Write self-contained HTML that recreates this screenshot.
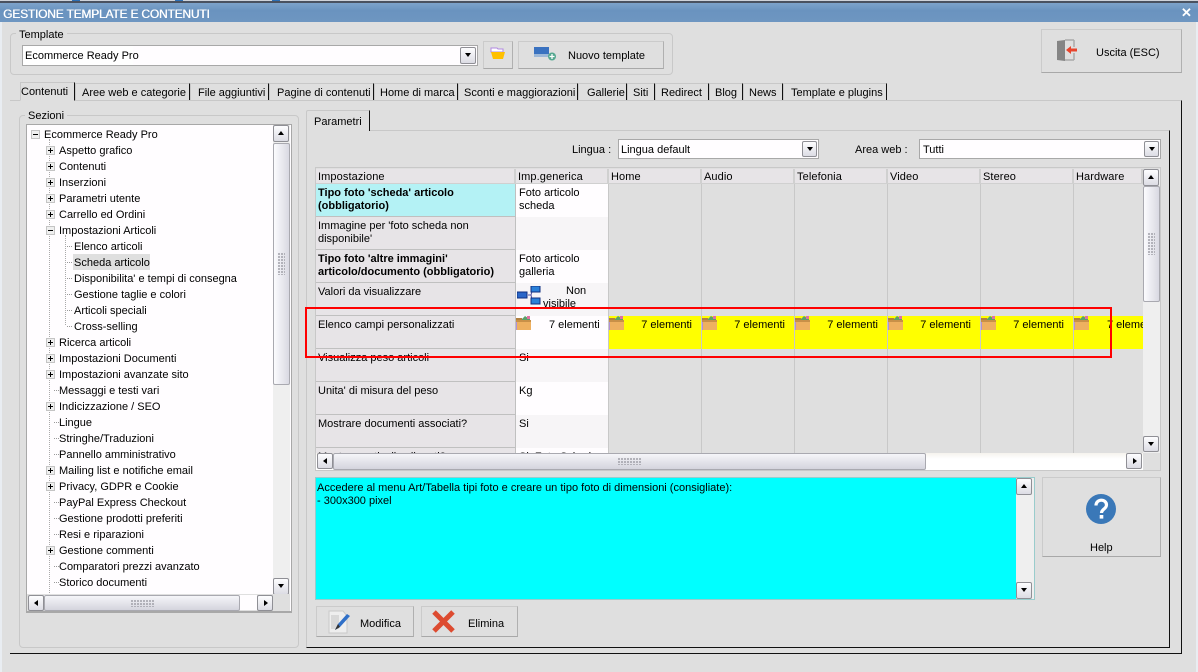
<!DOCTYPE html>
<html><head><meta charset="utf-8"><style>
html,body{margin:0;padding:0}
body{width:1198px;height:672px;position:relative;overflow:hidden;background:#dfdfdf;font:11px/13px "Liberation Sans",sans-serif;color:#000}
div,span,svg{position:absolute;box-sizing:border-box}
span{white-space:nowrap;line-height:17px}
.btn{background:#dfdfdf;border:1px solid #cbcbcb;border-right:1px solid #b0b0b0;border-bottom:1px solid #a8a8a8}
.grp{border:1px solid #c8c8c8;border-radius:4px}
.leg{background:#dfdfdf;padding:0 3px;line-height:15px;margin-top:1px}
.combo{background:#fffdff;border:1px solid #a8a8a8}
.sb{background:linear-gradient(#fdfdff,#dcdce4);border:1px solid #8f8f95;border-radius:2px;width:16px;height:16px}
.sb:after{content:"";position:absolute;left:3.500px;top:5px;border:3.500px solid transparent;border-top:4px solid #000;border-bottom:0}
.sb.up:after{border-top:0;border-bottom:4px solid #000}
.sb.l:after{left:5px;top:3.500px;border:3.500px solid transparent;border-right:4px solid #000;border-left:0}
.sb.r:after{left:6px;top:3.500px;border:3.500px solid transparent;border-left:4px solid #000;border-right:0}
.th{background:linear-gradient(90deg,#fbfbfe,#d9d9e2);border:1px solid #a9a9b0;border-radius:2px}
.grip{background:radial-gradient(circle at 1px 1px,#a0a0a8 1px,transparent 1px) 0 0/3px 3px}
.tb{height:17px;top:83px;border-top:1px solid #c8c8c8;border-left:1px solid #c8c8c8;border-right:1px solid #111}
.t{top:87px;line-height:13px}
.hd{top:169px;height:15px;background:#e7e4e7;border-right:2px solid #d0d0d0;border-bottom:1px solid #d0d0d0;padding:2px 0 0 2px;overflow:hidden;white-space:nowrap;letter-spacing:.1px}
.c1{left:316px;width:200px;height:33px;background:#e7e4e7;border-bottom:1px solid #c0c0c0;border-right:1px solid #c0c0c0;padding:3px 0 0 2px;overflow:hidden}
.c2{left:516px;width:93px;height:33px;padding:3px 0 0 3px;overflow:hidden;background:#fffdff;border-right:1px solid #c8c8c8}
.c2.a{background:#f7f5f7}
.vl{top:184px;width:1px;height:269px;background:#c8c8c8}
.ye{top:316px;height:33px;background:#ff0;width:93px;overflow:hidden}
.ye span{top:1px;right:9px}
.plus{width:9px;height:9px;background:#efefef;border:1px solid #c4c4c4}
.plus:before{content:"";position:absolute;left:1px;top:3px;width:5px;height:1px;background:#000}
.plus.p:after{content:"";position:absolute;left:3px;top:1px;width:1px;height:5px;background:#000}
.d{height:1px;width:5px;border-top:1px dotted #999}
.v{width:1px;border-left:1px dotted #aaa}
</style></head><body>
<!-- top -->
<div style="left:0;top:0;width:1198px;height:1px;background:#cfd3da"></div>
<div style="left:72px;top:0;width:8px;height:1px;background:#2d6fb5"></div>
<div style="left:175px;top:0;width:8px;height:1px;background:#2d6fb5"></div>
<div style="left:272px;top:0;width:8px;height:1px;background:#2d6fb5"></div>
<div style="left:0;top:1px;width:1198px;height:2px;background:#4a5260"></div>
<div style="left:0;top:3px;width:1198px;height:19px;background:linear-gradient(#7da3cb,#6a93bf 40%,#6e96c1)"></div>
<span style="left:3px;top:6px;color:#fff;font-size:12px;letter-spacing:-.2px;text-shadow:.4px 0 0 #fff">GESTIONE TEMPLATE E CONTENUTI</span>
<span style="left:1181px;top:5px;color:#fff;font:bold 13px/15px 'Liberation Sans',sans-serif">✕</span>
<div style="left:0;top:22px;width:2px;height:650px;background:#e9edf2"></div>
<div style="left:1196px;top:22px;width:2px;height:650px;background:#e9edf2"></div>

<!-- template group -->
<div class="grp" style="left:10px;top:33px;width:663px;height:42px"></div>
<span class="leg" style="left:16px;top:27px">Template</span>
<div class="combo" style="left:22px;top:45px;width:456px;height:21px"></div>
<div style="left:23px;top:46px;width:110px;height:19px;background:#fff"></div>
<span style="left:25px;top:48px">Ecommerce Ready Pro</span>
<div class="sb" style="left:460px;top:47px;width:16px;height:17px"></div>
<div class="btn" style="left:483px;top:41px;width:30px;height:28px"></div>
<svg style="left:490px;top:47px" width="16" height="13" viewBox="0 0 16 13"><path d="M1 1h6l1 1h5v3H1z" fill="#fff" stroke="#b088e0"/><path d="M1 5h14l-2 7H3z" fill="#ffc000"/></svg>
<div class="btn" style="left:518px;top:41px;width:146px;height:28px"></div>
<svg style="left:533px;top:46px" width="24" height="16" viewBox="0 0 24 16"><rect x="1" y="1" width="15" height="7" fill="#3a72c0"/><rect x="1" y="8" width="15" height="3" fill="#9db8d8"/><circle cx="19" cy="10.500" r="4" fill="#55a890"/><path d="M19 8v5M16.500 10.500h5" stroke="#fff" stroke-width="1.300"/></svg>
<span style="left:568px;top:48px">Nuovo template</span>
<div class="btn" style="left:1041px;top:29px;width:141px;height:44px"></div>
<svg style="left:1055px;top:38px" width="24" height="24" viewBox="0 0 24 24"><path d="M10 2h9M19 2v7M19 15v7M10 22h9" stroke="#aaa" stroke-width="1.500" fill="none"/><path d="M2 3l8-1v21l-8-1z" fill="#858585"/><path d="M11 12l5-4v2.500h6v3h-6V16z" fill="#e8442c"/></svg>
<span style="left:1096px;top:45px">Uscita (ESC)</span>

<!-- tabs -->
<div style="left:10px;top:100px;width:1172px;height:554px;border-top:1px solid #c8c8c8;border-right:1px solid #111;border-bottom:1px solid #111"></div>
<div class="tb" style="left:20px;width:55px;top:82px;height:19px;background:#dfdfdf;border-bottom:1px solid #dfdfdf"></div>
<div class="tb" style="left:75px;width:115px"></div>
<div class="tb" style="left:190px;width:79px"></div>
<div class="tb" style="left:269px;width:105px"></div>
<div class="tb" style="left:374px;width:84px"></div>
<div class="tb" style="left:458px;width:120px"></div>
<div class="tb" style="left:578px;width:49px"></div>
<div class="tb" style="left:627px;width:28px"></div>
<div class="tb" style="left:655px;width:54px"></div>
<div class="tb" style="left:709px;width:34px"></div>
<div class="tb" style="left:743px;width:40px"></div>
<div class="tb" style="left:783px;width:104px"></div>
<span class="t" style="left:21px;top:86px">Contenuti</span>
<span class="t" style="left:82px">Aree web e categorie</span>
<span class="t" style="left:198px">File aggiuntivi</span>
<span class="t" style="left:277px">Pagine di contenuti</span>
<span class="t" style="left:380px">Home di marca</span>
<span class="t" style="left:464px">Sconti e maggiorazioni</span>
<span class="t" style="left:587px">Gallerie</span>
<span class="t" style="left:633px">Siti</span>
<span class="t" style="left:661px">Redirect</span>
<span class="t" style="left:715px">Blog</span>
<span class="t" style="left:749px">News</span>
<span class="t" style="left:791px">Template e plugins</span>

<!-- sezioni -->
<div class="grp" style="left:19px;top:115px;width:280px;height:533px"></div>
<span class="leg" style="left:25px;top:108px">Sezioni</span>
<div style="left:26px;top:124px;width:266px;height:489px;background:#fffdff;border:1px solid #a8a8a8;border-bottom:2px solid #a8a8a8;overflow:hidden">
<div class="v" style="left:22px;top:14px;height:460px"></div>
<div class="v" style="left:38px;top:110px;height:90px"></div>
</div>
<div class="d" style="left:54px;top:390px"></div><div class="d" style="left:54px;top:422px"></div><div class="d" style="left:54px;top:438px"></div><div class="d" style="left:54px;top:454px"></div><div class="d" style="left:54px;top:502px"></div><div class="d" style="left:54px;top:518px"></div><div class="d" style="left:54px;top:534px"></div><div class="d" style="left:54px;top:566px"></div><div class="d" style="left:54px;top:582px"></div>
<div class="d" style="left:67px;top:246px"></div><div class="d" style="left:67px;top:262px"></div><div class="d" style="left:67px;top:278px"></div><div class="d" style="left:67px;top:294px"></div><div class="d" style="left:67px;top:310px"></div><div class="d" style="left:67px;top:326px"></div>
<div class="plus" style="left:31px;top:130px"></div>
<span style="left:44px;top:127px">Ecommerce Ready Pro</span>
<div class="plus p" style="left:46px;top:146px"></div><span style="left:59px;top:143px">Aspetto grafico</span>
<div class="plus p" style="left:46px;top:162px"></div><span style="left:59px;top:159px">Contenuti</span>
<div class="plus p" style="left:46px;top:178px"></div><span style="left:59px;top:175px">Inserzioni</span>
<div class="plus p" style="left:46px;top:194px"></div><span style="left:59px;top:191px">Parametri utente</span>
<div class="plus p" style="left:46px;top:210px"></div><span style="left:59px;top:207px">Carrello ed Ordini</span>
<div class="plus" style="left:46px;top:226px"></div><span style="left:59px;top:223px">Impostazioni Articoli</span>
<span style="left:74px;top:239px">Elenco articoli</span>
<div style="left:73px;top:254px;width:77px;height:16px;background:#dfdfdf"></div>
<span style="left:74px;top:255px">Scheda articolo</span>
<span style="left:74px;top:271px">Disponibilita' e tempi di consegna</span>
<span style="left:74px;top:287px">Gestione taglie e colori</span>
<span style="left:74px;top:303px">Articoli speciali</span>
<span style="left:74px;top:319px">Cross-selling</span>
<div class="plus p" style="left:46px;top:338px"></div><span style="left:59px;top:335px">Ricerca articoli</span>
<div class="plus p" style="left:46px;top:354px"></div><span style="left:59px;top:351px">Impostazioni Documenti</span>
<div class="plus p" style="left:46px;top:370px"></div><span style="left:59px;top:367px">Impostazioni avanzate sito</span>
<span style="left:59px;top:383px">Messaggi e testi vari</span>
<div class="plus p" style="left:46px;top:402px"></div><span style="left:59px;top:399px">Indicizzazione / SEO</span>
<span style="left:59px;top:415px">Lingue</span>
<span style="left:59px;top:431px">Stringhe/Traduzioni</span>
<span style="left:59px;top:447px">Pannello amministrativo</span>
<div class="plus p" style="left:46px;top:466px"></div><span style="left:59px;top:463px">Mailing list e notifiche email</span>
<div class="plus p" style="left:46px;top:482px"></div><span style="left:59px;top:479px">Privacy, GDPR e Cookie</span>
<span style="left:59px;top:495px">PayPal Express Checkout</span>
<span style="left:59px;top:511px">Gestione prodotti preferiti</span>
<span style="left:59px;top:527px">Resi e riparazioni</span>
<div class="plus p" style="left:46px;top:546px"></div><span style="left:59px;top:543px">Gestione commenti</span>
<span style="left:59px;top:559px">Comparatori prezzi avanzato</span>
<span style="left:59px;top:575px">Storico documenti</span>
<!-- tree scrollbars -->
<div style="left:273px;top:125px;width:17px;height:470px;background:#efefef"></div>
<div class="sb up" style="left:273px;top:125px;height:17px"></div>
<div class="th" style="left:273px;top:143px;width:17px;height:242px"></div>
<div class="grip" style="left:278px;top:253px;width:7px;height:22px"></div>
<div class="sb" style="left:273px;top:578px;height:17px"></div>
<div style="left:27px;top:594px;width:263px;height:17px;background:#dfdfdf"></div>
<div style="left:44px;top:595px;width:213px;height:15px;background:#fffdff"></div>
<div class="sb l" style="left:28px;top:595px"></div>
<div class="th" style="left:44px;top:595px;width:196px;height:16px;background:linear-gradient(#f5f5f9,#d4d4dd)"></div>
<div class="grip" style="left:131px;top:600px;width:23px;height:7px"></div>
<div class="sb r" style="left:257px;top:595px"></div>

<!-- parametri -->
<div style="left:306px;top:130px;width:864px;height:518px;border-top:1px solid #c8c8c8;border-left:1px solid #c8c8c8;border-right:1px solid #111;border-bottom:1px solid #111"></div>
<div style="left:306px;top:110px;width:64px;height:21px;background:#dfdfdf;border-top:1px solid #c8c8c8;border-left:1px solid #c8c8c8;border-right:1px solid #111;border-radius:2px 0 0 0"></div>
<span style="left:314px;top:114px">Parametri</span>
<span style="left:572px;top:142px">Lingua :</span>
<div class="combo" style="left:618px;top:139px;width:201px;height:20px"></div>
<span style="left:621px;top:142px">Lingua default</span>
<div class="sb" style="left:802px;top:141px;width:15px"></div>
<span style="left:855px;top:142px">Area web :</span>
<div class="combo" style="left:919px;top:139px;width:242px;height:20px"></div>
<span style="left:923px;top:142px">Tutti</span>
<div class="sb" style="left:1144px;top:141px;width:15px"></div>

<!-- grid -->
<div style="left:315px;top:167px;width:846px;height:304px;border:1px solid #c8c8c8"></div>
<div class="hd" style="left:316px;width:200px">Impostazione</div>
<div class="hd" style="left:516px;width:93px">Imp.generica</div>
<div class="hd" style="left:609px;width:93px">Home</div>
<div class="hd" style="left:702px;width:93px">Audio</div>
<div class="hd" style="left:795px;width:93px">Telefonia</div>
<div class="hd" style="left:888px;width:93px">Video</div>
<div class="hd" style="left:981px;width:93px">Stereo</div>
<div class="hd" style="left:1074px;width:69px">Hardware</div>
<div class="vl" style="left:701px"></div><div class="vl" style="left:794px"></div><div class="vl" style="left:887px"></div><div class="vl" style="left:980px"></div><div class="vl" style="left:1073px"></div>

<div class="c1" style="top:184px;background:#b4f2f5;font-weight:bold">Tipo foto 'scheda' articolo<br>(obbligatorio)</div>
<div class="c2" style="top:184px">Foto articolo<br>scheda</div>
<div class="c1" style="top:217px">Immagine per 'foto scheda non<br>disponibile'</div>
<div class="c2 a" style="top:217px"></div>
<div class="c1" style="top:250px;font-weight:bold">Tipo foto 'altre immagini'<br>articolo/documento (obbligatorio)</div>
<div class="c2" style="top:250px">Foto articolo<br>galleria</div>
<div class="c1" style="top:283px">Valori da visualizzare</div>
<div class="c2 a" style="top:283px"><span style="left:50px;top:0">Non</span><span style="left:27px;top:13px">visibile</span>
<svg style="left:1px;top:3px" width="24" height="20" viewBox="0 0 24 20"><path d="M11 9h3M14 9q1-5 4-6M14 9q1 6 4 7" stroke="#5050a0" fill="none"/><rect x="0" y="6" width="10" height="6" fill="#2a66c8" stroke="#103080"/><rect x="14" y="0" width="9" height="6" fill="#2a80d8" stroke="#103080"/><rect x="14" y="12" width="9" height="6" fill="#2a80d8" stroke="#103080"/></svg></div>
<div class="c1" style="top:316px">Elenco campi personalizzati</div>
<div class="c2" style="top:316px"><span style="left:33px;top:1px">7 elementi</span></div>
<div class="c1" style="top:349px">Visualizza peso articoli</div>
<div class="c2 a" style="top:349px">Si</div>
<div class="c1" style="top:382px">Unita' di misura del peso</div>
<div class="c2" style="top:382px">Kg</div>
<div class="c1" style="top:415px">Mostrare documenti associati?</div>
<div class="c2 a" style="top:415px">Si</div>
<div class="c1" style="top:448px;height:5px;border-bottom:0">Mostrare articoli collegati?</div>
<div class="c2" style="top:448px;height:5px">Si, Foto Scheda</div>

<div class="ye" style="left:609px;width:92px"><span>7 elementi</span></div>
<div class="ye" style="left:702px;width:92px"><span>7 elementi</span></div>
<div class="ye" style="left:795px;width:92px"><span>7 elementi</span></div>
<div class="ye" style="left:888px;width:92px"><span>7 elementi</span></div>
<div class="ye" style="left:981px;width:92px"><span>7 elementi</span></div>
<div class="ye" style="left:1074px;width:69px"><span style="left:33px;right:auto">7 elementi</span></div>
<svg width="0" height="0" style="left:0;top:0"><defs><g id="fo"><path d="M6 3l3-3 3 2 2-1v6H6z" fill="#5aa06a"/><path d="M11 0h3v3h-3z" fill="#e070a0"/><path d="M0 2h6v2H0z" fill="#b08040"/><path d="M0 4h15v10H0z" fill="#eeb060"/><path d="M0 4h15v2H0z" fill="#c89048"/><path d="M0 6h1v8H0z" fill="#b090d8"/></g></defs></svg>
<svg style="left:516px;top:316px" width="15" height="14"><use href="#fo"/></svg>
<svg style="left:609px;top:316px" width="15" height="14"><use href="#fo"/></svg>
<svg style="left:702px;top:316px" width="15" height="14"><use href="#fo"/></svg>
<svg style="left:795px;top:316px" width="15" height="14"><use href="#fo"/></svg>
<svg style="left:888px;top:316px" width="15" height="14"><use href="#fo"/></svg>
<svg style="left:981px;top:316px" width="15" height="14"><use href="#fo"/></svg>
<svg style="left:1074px;top:316px" width="15" height="14"><use href="#fo"/></svg>

<!-- grid scrollbars -->
<div style="left:1143px;top:169px;width:17px;height:301px;background:#efefef"></div>
<div class="sb up" style="left:1143px;top:169px;height:17px"></div>
<div class="th" style="left:1143px;top:186px;width:17px;height:116px"></div>
<div class="grip" style="left:1148px;top:233px;width:7px;height:22px"></div>
<div class="sb" style="left:1143px;top:436px;height:16px"></div>
<div style="left:1143px;top:453px;width:17px;height:17px;background:#dfdfdf"></div>
<div style="left:316px;top:453px;width:827px;height:17px;background:linear-gradient(#f5f3ee,#fff 35%)"></div>
<div class="sb l" style="left:317px;top:453px"></div>
<div class="th" style="left:333px;top:453px;width:593px;height:17px;background:linear-gradient(#f5f5f9,#d4d4dd)"></div>
<div class="grip" style="left:618px;top:458px;width:23px;height:7px"></div>
<div class="sb r" style="left:1126px;top:453px"></div>

<!-- red -->
<div style="left:305px;top:307px;width:807px;height:51px;border:2px solid #f00"></div>

<!-- info -->
<div style="left:315px;top:477px;width:720px;height:123px;background:#0ff;border:1px solid #9cc"></div>
<span style="left:317px;top:480px">Accedere al menu Art/Tabella tipi foto e creare un tipo foto di dimensioni (consigliate):</span>
<span style="left:317px;top:493px">- 300x300 pixel</span>
<div style="left:1016px;top:478px;width:18px;height:121px;background:#efefef"></div>
<div class="sb up" style="left:1016px;top:478px;height:17px"></div>
<div class="sb" style="left:1016px;top:582px;height:17px"></div>

<div class="btn" style="left:1042px;top:477px;width:119px;height:80px"></div>
<svg style="left:1086px;top:494px" width="30" height="30" viewBox="0 0 30 30"><circle cx="15" cy="15" r="15" fill="#3a78b8"/><path d="M10 11.500c0-7 10.500-7 10.500-.5 0 4-5 4-5 8" stroke="#fff" stroke-width="3.200" fill="none"/><rect x="13.700" y="21" width="3.600" height="3.600" fill="#fff"/></svg>
<span style="left:1090px;top:540px">Help</span>

<div class="btn" style="left:316px;top:606px;width:98px;height:31px"></div>
<svg style="left:327px;top:610px" width="24" height="24" viewBox="0 0 24 24"><path d="M2 1h14l4 5v17H2z" fill="#eee" stroke="#c8c8c8"/><path d="M4 5h8v14H4z" fill="#d8d8d8"/><path d="M8 20l3-6L20 4l3 2-10 11z" fill="#3070c8"/><path d="M8 20l3-6 2 3z" fill="#333"/></svg>
<span style="left:360px;top:616px">Modifica</span>
<div class="btn" style="left:421px;top:606px;width:97px;height:31px"></div>
<svg style="left:432px;top:610px" width="23" height="23" viewBox="0 0 23 23"><path d="M2 2l19 19M21 2L2 21" stroke="#dd4b30" stroke-width="5"/></svg>
<span style="left:468px;top:616px">Elimina</span>
</body></html>
